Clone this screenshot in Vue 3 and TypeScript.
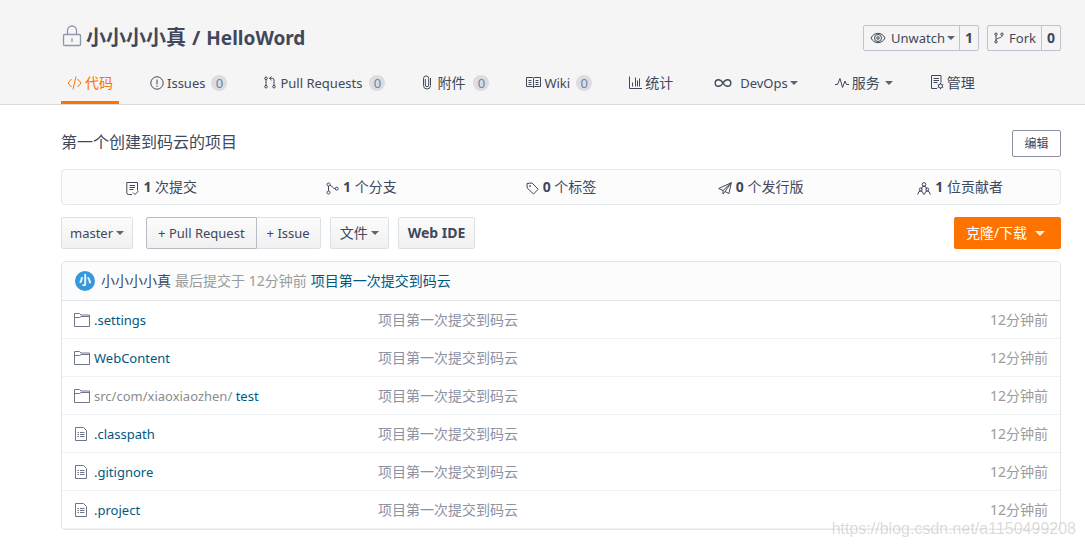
<script setup lang="ts">
import { h, ref } from 'vue'

interface Shape {
  box: string
  w: number
  h: number
  d: string
}

interface Tab {
  id: string
  label: string
  icon: string
  latin?: boolean
  count?: number
  menu?: boolean
}

interface Entry {
  kind: 'folder' | 'file'
  prefix?: string
  name: string
}

const icons: Record<string, Shape> = {
  lock: { box: '0 0 20 22', w: 20, h: 22, d: 'M2.500 9.500h15a1 1 0 0 1 1 1v9a1 1 0 0 1-1 1h-15a1 1 0 0 1-1-1v-9a1 1 0 0 1 1-1zM5.500 9.500V5.500a4.500 4.500 0 0 1 9 0V9.500M10 13v4' },
  eye: { box: '0 0 16 12', w: 16, h: 12, d: 'M1 6C4-.2 12-.2 15 6C12 12.200 4 12.200 1 6zM8 2.500a3.500 3.500 0 1 0 0 7a3.500 3.500 0 1 0 0-7M8 4.700a1.300 1.300 0 1 0 0 2.600a1.300 1.300 0 1 0 0-2.600' },
  fork: { box: '0 0 10 12', w: 10, h: 12, d: 'M2 1a1.200 1.200 0 1 0 0 2.400a1.200 1.200 0 1 0 0-2.400M2 8.600a1.200 1.200 0 1 0 0 2.400a1.200 1.200 0 1 0 0-2.400M8 1a1.200 1.200 0 1 0 0 2.400a1.200 1.200 0 1 0 0-2.400M2 3.400v5.200M8 3.400C8 7 3 5 2 8.200' },
  code: { box: '0 0 15 14', w: 15, h: 14, d: 'M4.500 3L1 7l3.500 4M10.500 3L14 7l-3.500 4M9 .5L6 13.500' },
  issue: { box: '0 0 14 14', w: 14, h: 14, d: 'M7 .8a6.200 6.200 0 1 0 0 12.400a6.200 6.200 0 1 0 0-12.400M7 3.500v5M7 9.500v1.300' },
  pull: { box: '0 0 12 13', w: 12, h: 13, d: 'M2 1a1.300 1.300 0 1 0 0 2.600a1.300 1.300 0 1 0 0-2.600M2 9.400a1.300 1.300 0 1 0 0 2.600a1.300 1.300 0 1 0 0-2.600M10 9.400a1.300 1.300 0 1 0 0 2.600a1.300 1.300 0 1 0 0-2.600M2 3.600v5.800M10 9.400V4q0-1.700-1.700-1.700H5.500M7.500 .5L5.500 2.300l2 1.900' },
  clip: { box: '0 0 10 15', w: 10, h: 15, d: 'M3.300 4v6a1.700 1.700 0 0 0 3.400 0V3.500a2.600 2.600 0 0 0-5.200 0V10.500a3.500 3.500 0 0 0 7 0V3' },
  book: { box: '0 0 15 11', w: 15, h: 11, d: 'M.5.500h6q1 0 1 1q0-1 1-1h6v9h-6q-1 0-1 1q0-1-1-1h-6zM7.500 1.500v9M2.500 3.500h3M2.500 5.500h3M2.500 7.500h3M9.500 3.500h3M9.500 5.500h3M9.500 7.500h3' },
  chart: { box: '0 0 13 13', w: 13, h: 13, d: 'M.5.500v12H13M3.500 10.500v-4M6.500 10.500v-9M8.500 10.500v-6M10.500 10.500v-8' },
  infinity: { box: '0 0 18 10', w: 18, h: 10, d: 'M9 5C7.500 2.500 6.500 1.700 4.500 1.700a3.300 3.300 0 0 0 0 6.600C6.500 8.300 7.500 7.500 9 5C10.500 2.500 11.500 1.700 13.500 1.700a3.300 3.300 0 0 1 0 6.600C11.500 8.300 10.500 7.500 9 5z' },
  pulse: { box: '0 0 14 12', w: 14, h: 12, d: 'M0 7.500h2.500L5 1.500l2.500 9L10 4l1.500 3.500H14' },
  manage: { box: '0 0 14 15', w: 14, h: 15, d: 'M7 13.500H1.500v-13h9.500v7M3.500 3.500h5.500M3.500 5.500h5.500M3.500 7.500h4M10.500 9a2 2 0 1 0 0 4a2 2 0 1 0 0-4M10.500 7.700v1.300M10.500 13v1.300M7.700 9.400l1.100.6M12.200 12l1.100.6M13.300 9.400l-1.100.6M8.800 12l-1.100.6' },
  commit: { box: '0 0 13 15', w: 13, h: 15, d: 'M6 13.500H2.500q-1.700 0-1.700-1.700V1.500h10.700v8M3.500 4.500h5.500M3.500 6.500h5.500M3.500 8.500h4M7 11.500l2 2L12.500 10' },
  branch: { box: '0 0 13 13', w: 13, h: 13, d: 'M2.500 1a1.500 1.500 0 1 0 0 3a1.500 1.500 0 1 0 0-3M2.500 9a1.500 1.500 0 1 0 0 3a1.500 1.500 0 1 0 0-3M10.700 5.200a1.500 1.500 0 1 0 0 3a1.500 1.500 0 1 0 0-3M2.500 4v5M4 3.200C6 3.500 6.500 6.700 9.200 6.700' },
  tag: { box: '0 0 13 13', w: 13, h: 13, d: 'M1 1.500L6 1l6.200 6.200L7.500 12L1.200 6zM4 3.300v1.400M3.300 4h1.400' },
  plane: { box: '0 0 14 13', w: 14, h: 13, d: 'M.7 6.500L13.300.700L11 11.500L7 9.500L5 12V8.500zM5 8.500L13.300.700L7 9.500' },
  people: { box: '0 0 14 13', w: 14, h: 13, d: 'M7 .6a1.800 1.800 0 1 0 0 3.600a1.800 1.800 0 1 0 0-3.600M4.300 7.500q0-3.300 2.700-3.300t2.700 3.300M3.700 6a1.500 1.500 0 1 0 0 3a1.500 1.500 0 1 0 0-3M10.300 6a1.500 1.500 0 1 0 0 3a1.500 1.500 0 1 0 0-3M.7 12.500Q1.200 9 3.700 9T6.500 12.500M7.500 12.500Q8 9 10.300 9T13.300 12.500' },
  folder: { box: '0 0 16 14', w: 16, h: 14, d: 'M.5 13.500V.500h5l1.500 1.500h8.500v11.500zM.5 4.500h5L7 3.500h8.500' },
  file: { box: '0 0 12 14', w: 12, h: 14, d: 'M.5.500h8l3 3v10H.500zM2.500 5.500h1.500M5 5.500h4.500M2.500 7.500h1.500M5 7.500h4.500M2.500 9.500h1.500M5 9.500h4.500' },
}

const tabs: Tab[] = [
  { id: 'code', label: '代码', icon: 'code' },
  { id: 'issues', label: 'Issues', icon: 'issue', latin: true, count: 0 },
  { id: 'pulls', label: 'Pull Requests', icon: 'pull', latin: true, count: 0 },
  { id: 'attach', label: '附件', icon: 'clip', count: 0 },
  { id: 'wiki', label: 'Wiki', icon: 'book', latin: true, count: 0 },
  { id: 'stats', label: '统计', icon: 'chart' },
  { id: 'devops', label: 'DevOps', icon: 'infinity', latin: true, menu: true },
  { id: 'services', label: '服务', icon: 'pulse', menu: true },
  { id: 'manage', label: '管理', icon: 'manage' },
]

const stats = [
  { icon: 'commit', value: 1, unit: '次提交' },
  { icon: 'branch', value: 1, unit: '个分支' },
  { icon: 'tag', value: 0, unit: '个标签' },
  { icon: 'plane', value: 0, unit: '个发行版' },
  { icon: 'people', value: 1, unit: '位贡献者' },
]

const entries: Entry[] = [
  { kind: 'folder', name: '.settings' },
  { kind: 'folder', name: 'WebContent' },
  { kind: 'folder', prefix: 'src/com/xiaoxiaozhen/', name: 'test' },
  { kind: 'file', name: '.classpath' },
  { kind: 'file', name: '.gitignore' },
  { kind: 'file', name: '.project' },
]

const active = ref('code')

const Icon = (props: { name: string }) => {
  const s = icons[props.name]
  return h('svg', { class: 'icon', viewBox: s.box, width: s.w, height: s.h, 'aria-hidden': 'true' }, [h('path', { d: s.d })])
}
Icon.props = ['name']
</script>

<template>
  <div class="page">
    <header class="top">
      <div class="title-row">
        <h1><Icon name="lock" class="lock" /><a href="#">小小小小真</a><span class="slash">/</span><a href="#" class="repo">HelloWord</a></h1>
        <div class="social">
          <div class="pair">
            <button type="button" class="watch"><Icon name="eye" />Unwatch<i class="caret"></i></button>
            <a href="#">1</a>
          </div>
          <div class="pair">
            <button type="button" class="fork"><Icon name="fork" />Fork</button>
            <a href="#">0</a>
          </div>
        </div>
      </div>
      <nav class="tabs">
        <a v-for="t in tabs" :key="t.id" href="#" :class="[t.id, { active: active === t.id, latin: t.latin }]" @click.prevent="active = t.id">
          <Icon :name="t.icon" /><span>{{ t.label }}</span>
          <span v-if="t.count !== undefined" class="badge">{{ t.count }}</span>
          <i v-if="t.menu" class="caret"></i>
        </a>
      </nav>
    </header>

    <main>
      <div class="about">
        <p>第一个创建到码云的项目</p>
        <button type="button" class="edit">编辑</button>
      </div>

      <ul class="summary">
        <li v-for="s in stats" :key="s.icon">
          <a href="#"><Icon :name="s.icon" /><span><b>{{ s.value }}</b> {{ s.unit }}</span></a>
        </li>
      </ul>

      <div class="toolbar">
        <button type="button" class="btn branch-select" aria-haspopup="listbox">master<i class="caret"></i></button>
        <div class="group">
          <button type="button" class="btn first">+ Pull Request</button>
          <button type="button" class="btn last">+ Issue</button>
        </div>
        <button type="button" class="btn files" aria-haspopup="menu">文件<i class="caret"></i></button>
        <button type="button" class="btn ide">Web IDE</button>
        <button type="button" class="clone" aria-haspopup="menu">克隆/下载<i class="caret"></i></button>
      </div>

      <section class="tree">
        <div class="last-commit">
          <span class="avatar">小</span>
          <a href="#" class="author">小小小小真</a>
          <span class="when">最后提交于 12分钟前</span>
          <a href="#" class="message">项目第一次提交到码云</a>
        </div>
        <table>
          <tbody>
            <tr v-for="e in entries" :key="e.name">
              <td class="name">
                <div>
                  <Icon :name="e.kind" :class="e.kind" />
                  <a href="#"><span v-if="e.prefix" class="prefix">{{ e.prefix }}</span> {{ e.name }}</a>
                </div>
              </td>
              <td>项目第一次提交到码云</td>
              <td class="age">12分钟前</td>
            </tr>
          </tbody>
        </table>
      </section>
    </main>
    <div class="watermark">https://blog.csdn.net/a1150499208</div>
  </div>
</template>

<style>
body {
  margin: 0;
  background: #fff;
}
</style>

<style scoped>
.page {
  position: relative;
  padding-bottom: 17px;
  color: #40485b;
  font: 14px/20px "Noto Sans", "Noto Sans CJK SC", sans-serif;
}
a {
  color: inherit;
  text-decoration: none;
}
button {
  display: flex;
  align-items: center;
  justify-content: center;
  box-sizing: border-box;
  margin: 0;
  padding: 0;
  border: 0;
  background: none;
  color: inherit;
  font: inherit;
  font-size: 13px;
  white-space: nowrap;
  cursor: pointer;
}
.icon {
  flex: none;
  fill: none;
  stroke: currentColor;
  stroke-width: 1;
}
.caret {
  flex: none;
  border: 4px solid transparent;
  border-top-color: currentColor;
  border-bottom: 0;
  opacity: .85;
}
.top {
  padding: 22px 24px 0 61px;
  background: #f5f5f5;
  border-bottom: 1px solid #dcdcde;
}
.title-row {
  display: flex;
  justify-content: space-between;
}
h1 {
  display: flex;
  align-items: center;
  height: 32px;
  margin: 0;
  font-size: 20px;
  line-height: 30px;
}
.lock {
  margin: 0 4px 4px 1px;
  color: #8f98a6;
  stroke-width: 1.3;
}
.slash {
  margin: 0 6px;
}
.repo {
  font-size: 19px;
}
.social {
  display: flex;
  gap: 8px;
  padding-top: 3px;
}
.pair {
  display: flex;
  box-sizing: border-box;
  height: 26px;
  border: 1px solid #bfc3cf;
  border-radius: 2px;
  font-size: 13px;
}
.pair button {
  padding: 0 4px 0 6px;
  gap: 5px;
}
.pair .fork {
  padding-right: 5px;
}
.watch .caret {
  margin-left: -3px;
}
.pair a {
  width: 18px;
  border-left: 1px solid #bfc3cf;
  font-size: 14px;
  font-weight: 700;
  line-height: 24px;
  text-align: center;
}
.tabs {
  display: flex;
  gap: 25px;
  height: 50px;
}
.tabs a {
  display: flex;
  align-items: center;
  box-sizing: border-box;
  gap: 3px;
  padding: 10px 6px 0;
  border-bottom: 3px solid transparent;
  white-space: nowrap;
}
.tabs a.latin {
  font-size: 13px;
}
.tabs a.active {
  border-color: #fe7300;
  color: #fe7300;
}
.tabs .pulls {
  gap: 4px;
}
.tabs .attach {
  gap: 5px;
}
.tabs .devops {
  gap: 8px;
  padding-left: 10px;
}
.devops .icon {
  stroke-width: 1.4;
}
.tabs .caret {
  margin-left: 2px;
}
.tabs .devops .caret {
  margin-left: -6px;
}
.badge {
  width: 16px;
  height: 16px;
  margin-left: 3px;
  border-radius: 8px;
  background: #dcdde0;
  color: #7180a5;
  font-size: 13px;
  line-height: 16px;
  text-align: center;
}
main {
  padding: 25px 24px 0 61px;
}
.about {
  display: flex;
  align-items: flex-start;
  justify-content: space-between;
}
.about p {
  margin: 0;
  font-size: 16px;
  line-height: 24px;
}
.edit {
  width: 49px;
  height: 27px;
  border: 1px solid #8c92a4;
  border-radius: 2px;
  background: #fff;
  font-size: 12px;
}
.summary {
  display: grid;
  grid-template-columns: repeat(5, 1fr);
  margin: 12px 0;
  padding: 0;
  border: 1px solid #e3e9ed;
  border-radius: 4px;
  background: #fcfcfc;
  list-style: none;
}
.summary a {
  display: flex;
  align-items: center;
  justify-content: center;
  gap: 4px;
  height: 34px;
}
.summary .icon {
  margin-top: 2px;
}
.toolbar {
  display: flex;
  align-items: center;
}
.btn {
  height: 32px;
  padding: 0 10px;
  border: 1px solid #dce1e6;
  border-radius: 2px;
  background: linear-gradient(#fcfcfc, #f0f0f0);
}
.btn .caret {
  margin-left: 3px;
}
.branch-select {
  padding: 0 8px;
}
.group {
  display: flex;
  margin: 0 9px 0 13px;
}
.first {
  padding: 0 11px;
  border-color: #b7bdc5;
  border-radius: 2px 0 0 2px;
}
.last {
  border-left: 0;
  border-radius: 0 2px 2px 0;
}
.files {
  margin-right: 9px;
  padding: 0 9px;
  font-size: 14px;
}
.ide {
  padding: 0 9px;
  font-size: 14px;
  font-weight: 700;
}
.clone {
  width: 107px;
  height: 32px;
  margin-left: auto;
  padding-right: 4px;
  border-radius: 2px;
  background: #fe7300;
  color: #fff;
  font-size: 14px;
}
.clone .caret {
  margin-left: 8px;
  border-width: 5px 5px 0;
}
.tree {
  margin-top: 12px;
  border: 1px solid #e0e5ea;
  border-radius: 4px;
  overflow: hidden;
}
.last-commit {
  display: flex;
  align-items: center;
  gap: 4px;
  height: 38px;
  padding: 0 13px;
  border-bottom: 1px solid #dde3e9;
  background: #fcfcfc;
}
.avatar {
  width: 20px;
  height: 20px;
  margin-right: 2px;
  border-radius: 50%;
  background: #3498db;
  color: #fff;
  font-size: 12px;
  font-weight: 700;
  line-height: 20px;
  text-align: center;
}
.when {
  color: #9b9b9b;
}
.message,
.name a {
  color: #005980;
}
table {
  width: 100%;
  border-collapse: collapse;
  table-layout: fixed;
}
td {
  height: 37px;
  padding: 0 12px;
  border-bottom: 1px solid #eff2f5;
  color: #8c92a4;
}
.name {
  width: 280px;
  font-size: 13px;
}
.name div {
  display: flex;
  align-items: center;
  gap: 4px;
}
.name .icon {
  color: #70768a;
}
.name .file {
  margin: 0 3px 0 1px;
}
.prefix {
  color: #8c8c8c;
}
.age {
  width: 100px;
  color: #9b9b9b;
  text-align: right;
}
.watermark {
  position: absolute;
  right: 9px;
  bottom: 8px;
  color: rgba(150, 150, 150, .35);
  font: 16px/20px "Liberation Sans", sans-serif;
  text-shadow: 1px 1px 0 #fff;
  pointer-events: none;
}
</style>
